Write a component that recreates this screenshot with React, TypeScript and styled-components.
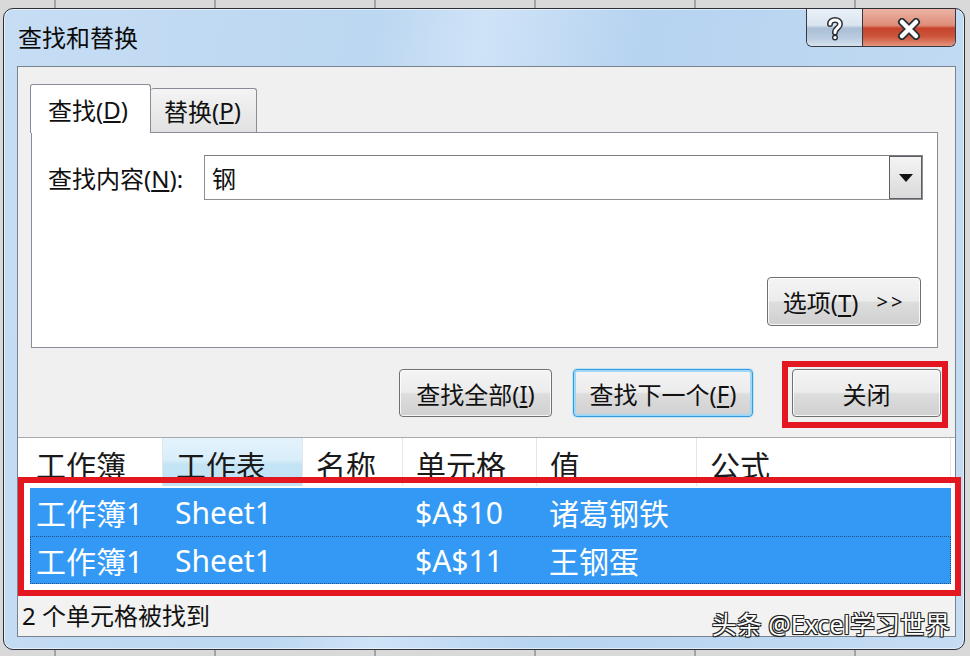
import React from "react"
import styled, { createGlobalStyle } from "styled-components"

const GlobalStyle = createGlobalStyle`
  html, body {
    margin: 0;
    padding: 0;
  }
  body {
    width: 970px;
    height: 656px;
    overflow: hidden;
    font-family: "Noto Sans", "Noto Sans CJK SC", sans-serif;
    color: #111;
    background-color: #d9d9d9;
    background-image: repeating-linear-gradient(90deg, transparent 0 54px, #a3a3a3 54px 56px, transparent 56px 160px);
  }
`

const Page = styled.div`
  padding: 8px 0 0 3px;
`

const Window = styled.div`
  position: relative;
  width: 962px;
  height: 642px;
  box-sizing: border-box;
  border: 1px solid #2c3036;
  border-radius: 10px;
  box-shadow: inset 0 0 0 1px rgba(255, 255, 255, 0.55);
  background: linear-gradient(100deg, #c6ddf4 0%, #bcd7f1 35%, #cfe3f7 45%, #b6d3f0 60%, #c5dcf3 100%);
  display: flex;
  flex-direction: column;
`

const TitleBar = styled.div`
  height: 57px;
  flex-shrink: 0;
  display: flex;
  align-items: flex-start;
`

const Title = styled.div`
  margin: 13px 0 0 14px;
  font-size: 24px;
  line-height: 32px;
  color: #0c0c0c;
`

const CaptionGroup = styled.div`
  margin-left: auto;
  margin-right: 8px;
  display: flex;
  height: 37px;
  border: 1px solid #353a42;
  border-top: none;
  border-radius: 0 0 6px 6px;
  overflow: hidden;
`

const CaptionButton = styled.div<{ $danger?: boolean; $w: number }>`
  width: ${(p) => p.$w}px;
  display: flex;
  align-items: center;
  justify-content: center;
  padding-top: 2px;
  box-sizing: border-box;
  background: ${(p) =>
    p.$danger
      ? "linear-gradient(#ebb3a5 0%, #df8d7a 44%, #c5432b 52%, #cd563d 75%, #e4957f 100%)"
      : "linear-gradient(#ebf1f8 0%, #d9e4ef 44%, #aabfd5 52%, #b9cbdf 78%, #d6e2ee 100%)"};
  & + & {
    border-left: 1px solid #353a42;
  }
`

const Client = styled.div`
  flex: 1;
  min-height: 0;
  margin: 0 8px 12px 13px;
  border: 1px solid #77838f;
  background: #f0f0f0;
  display: flex;
  flex-direction: column;
`

const TabArea = styled.div`
  padding: 17px 17px 0 12px;
`

const TabStrip = styled.div`
  display: flex;
  align-items: flex-end;
  height: 48px;
`

const Tab = styled.div<{ $active?: boolean }>`
  position: relative;
  z-index: ${(p) => (p.$active ? 2 : 1)};
  box-sizing: border-box;
  height: ${(p) => (p.$active ? 49 : 44)}px;
  width: ${(p) => (p.$active ? 121 : 106)}px;
  margin-bottom: ${(p) => (p.$active ? -1 : 0)}px;
  padding-left: ${(p) => (p.$active ? 17 : 13)}px;
  border: 1px solid #898c95;
  border-bottom: none;
  ${(p) => (p.$active ? "" : "border-left: none;")}
  border-radius: 3px 3px 0 0;
  background: ${(p) => (p.$active ? "#fff" : "linear-gradient(#f4f4f4, #e1e1e1)")};
  font-size: 24px;
  display: flex;
  align-items: center;
`

const Panel = styled.div`
  margin-left: 1px;
  height: 216px;
  box-sizing: border-box;
  border: 1px solid #898c95;
  background: #fff;
  padding: 22px 14px 21px 16px;
  display: flex;
  flex-direction: column;
`

const FindRow = styled.div`
  display: flex;
  align-items: center;
`

const Label = styled.div`
  width: 156px;
  font-size: 24px;
`

const ComboBox = styled.div`
  flex: 1;
  height: 45px;
  box-sizing: border-box;
  border: 1px solid #8d8f93;
  border-top-color: #7b7d80;
  background: #fff;
  display: flex;
  align-items: center;
  padding-left: 7px;
  font-size: 24px;
`

const ComboText = styled.div`
  flex: 1;
`

const DropButton = styled.div`
  width: 33px;
  height: 43px;
  box-sizing: border-box;
  border: 1px solid #5c5f63;
  background: linear-gradient(#f4f4f4, #dadada);
  display: flex;
  align-items: center;
  justify-content: center;
`

const Button = styled.div<{ $w: number; $focus?: boolean }>`
  position: relative;
  width: ${(p) => p.$w}px;
  height: 48px;
  box-sizing: border-box;
  border: 1px solid ${(p) => (p.$focus ? "#3d9ad8" : "#707070")};
  border-radius: 4px;
  box-shadow: ${(p) =>
    p.$focus ? "inset 0 0 0 2px #9fd8f6, 0 0 0 1px #bfe5f8" : "inset 0 0 0 1px rgba(255,255,255,0.8)"};
  background: linear-gradient(#f4f4f4 0%, #ececec 48%, #dddddd 52%, #d0d0d0 100%);
  display: flex;
  align-items: center;
  justify-content: center;
  font-size: 24px;
  color: #111;
  u {
    text-underline-offset: 3px;
  }
`

const OptionsButton = styled(Button)`
  align-self: flex-end;
  margin-top: auto;
  margin-right: 2px;
  height: 49px;
  gap: 18px;
`

const Arrows = styled.span`
  font-size: 20px;
  letter-spacing: 3px;
`

const ButtonRow = styled.div`
  display: flex;
  justify-content: flex-end;
  padding: 21px 14px 0 0;
`

const FindAllButton = styled(Button)``

const FindNextButton = styled(Button)`
  margin-left: 21px;
`

const CloseButton = styled(Button)`
  margin-left: 39px;
  &::after {
    content: "";
    position: absolute;
    top: -9px;
    left: -11px;
    right: -8px;
    bottom: -12px;
    border: 6px solid #e3171f;
  }
`

const ResultList = styled.div`
  position: relative;
  margin-top: 20px;
  height: 159px;
  box-sizing: border-box;
  border-top: 1px solid #a7abb0;
  background: #fff;
  padding: 0 4px 0 12px;
`

const columns = "133px 140px 100px 134px 160px 1fr"

const HeaderRow = styled.div`
  display: grid;
  grid-template-columns: ${columns};
  height: 48px;
`

const HeaderCell = styled.div<{ $sorted?: boolean; $first?: boolean }>`
  padding: 12px 0 0 ${(p) => (p.$first ? 6 : 13)}px;
  font-size: 30px;
  line-height: 32px;
  color: #1a1a1a;
  border-right: 1px solid #e3e6ea;
  background: ${(p) => (p.$sorted ? "linear-gradient(#e4f3fc 0%, #d9eefa 45%, #c4e4f5 55%, #bfe2f4 100%)" : "#fff")};
  white-space: nowrap;
  overflow: hidden;
`

const Rows = styled.div`
  padding-top: 2px;
`

const Row = styled.div<{ $focus?: boolean }>`
  display: grid;
  grid-template-columns: ${columns};
  height: 48px;
  align-items: center;
  background: #3399f5;
  color: #fff;
  font-size: 30px;
  ${(p) => (p.$focus ? "outline: 1px dotted rgba(20, 50, 90, 0.7); outline-offset: -1px;" : "")}
`

const Cell = styled.div<{ $first?: boolean }>`
  padding-left: ${(p) => (p.$first ? 6 : 12)}px;
  white-space: nowrap;
`

const Highlight = styled.div`
  position: absolute;
  top: 39px;
  left: 0;
  width: 943px;
  height: 119px;
  box-sizing: border-box;
  border: 6px solid #e3171f;
  pointer-events: none;
`

const StatusBar = styled.div`
  height: 40px;
  display: flex;
  align-items: center;
  padding: 0 0 4px 4px;
  box-sizing: border-box;
  font-size: 24px;
  background: #f2f2f2;
`

const Watermark = styled.div`
  position: absolute;
  right: 14px;
  bottom: 10px;
  font-size: 25px;
  line-height: 30px;
  color: #fff;
  text-shadow: 1px 1px 0 #222, -1px -1px 0 #222, 1px -1px 0 #222, -1px 1px 0 #222, 0 1px 1px #222;
`

const HelpIcon = () => (
  <svg width="18" height="26" viewBox="0 0 18 26">
    <path d="M4 8 C4 2.5 14 2.5 14 8 C14 12 9 12 9 16.5" fill="none" stroke="#2b2f36" strokeWidth="6" strokeLinecap="round" />
    <circle cx="9" cy="21.5" r="3" fill="#2b2f36" />
    <path d="M4 8 C4 2.5 14 2.5 14 8 C14 12 9 12 9 16.5" fill="none" stroke="#fff" strokeWidth="3" strokeLinecap="round" />
    <circle cx="9" cy="21.5" r="1.6" fill="#fff" />
  </svg>
)

const CloseIcon = () => (
  <svg width="26" height="22" viewBox="0 0 26 22">
    <path d="M6 4 L20 18 M20 4 L6 18" stroke="#2b2f36" strokeWidth="8" strokeLinecap="round" />
    <path d="M6 4 L20 18 M20 4 L6 18" stroke="#fff" strokeWidth="4.5" strokeLinecap="round" />
  </svg>
)

const results = [
  { book: "工作簿1", sheet: "Sheet1", name: "", cell: "$A$10", value: "诸葛钢铁", formula: "" },
  { book: "工作簿1", sheet: "Sheet1", name: "", cell: "$A$11", value: "王钢蛋", formula: "" },
]

const headers = ["工作簿", "工作表", "名称", "单元格", "值", "公式"]

export default function App() {
  return (
    <Page>
      <GlobalStyle />
      <Window>
        <TitleBar>
          <Title>查找和替换</Title>
          <CaptionGroup>
            <CaptionButton $w={55}>
              <HelpIcon />
            </CaptionButton>
            <CaptionButton $w={93} $danger>
              <CloseIcon />
            </CaptionButton>
          </CaptionGroup>
        </TitleBar>
        <Client>
          <TabArea>
            <TabStrip>
              <Tab $active>
                查找(<u>D</u>)
              </Tab>
              <Tab>
                替换(<u>P</u>)
              </Tab>
            </TabStrip>
            <Panel>
              <FindRow>
                <Label>
                  查找内容(<u>N</u>):
                </Label>
                <ComboBox>
                  <ComboText>钢</ComboText>
                  <DropButton>
                    <svg width="14" height="8" viewBox="0 0 14 8">
                      <path d="M0 0 H14 L7 8 Z" fill="#111" />
                    </svg>
                  </DropButton>
                </ComboBox>
              </FindRow>
              <OptionsButton $w={154}>
                <span>
                  选项(<u>T</u>)
                </span>
                <Arrows>&gt;&gt;</Arrows>
              </OptionsButton>
            </Panel>
          </TabArea>
          <ButtonRow>
            <FindAllButton $w={153}>
              查找全部(<u>I</u>)
            </FindAllButton>
            <FindNextButton $w={180} $focus>
              查找下一个(<u>F</u>)
            </FindNextButton>
            <CloseButton $w={149}>关闭</CloseButton>
          </ButtonRow>
          <ResultList>
            <HeaderRow>
              {headers.map((h, i) => (
                <HeaderCell key={h} $first={i === 0} $sorted={i === 1}>
                  {h}
                </HeaderCell>
              ))}
            </HeaderRow>
            <Rows>
              {results.map((r, i) => (
                <Row key={r.cell} $focus={i === 1}>
                  <Cell $first>{r.book}</Cell>
                  <Cell>{r.sheet}</Cell>
                  <Cell>{r.name}</Cell>
                  <Cell>{r.cell}</Cell>
                  <Cell>{r.value}</Cell>
                  <Cell>{r.formula}</Cell>
                </Row>
              ))}
            </Rows>
            <Highlight />
          </ResultList>
          <StatusBar>2 个单元格被找到</StatusBar>
        </Client>
        <Watermark>头条 @Excel学习世界</Watermark>
      </Window>
    </Page>
  )
}
